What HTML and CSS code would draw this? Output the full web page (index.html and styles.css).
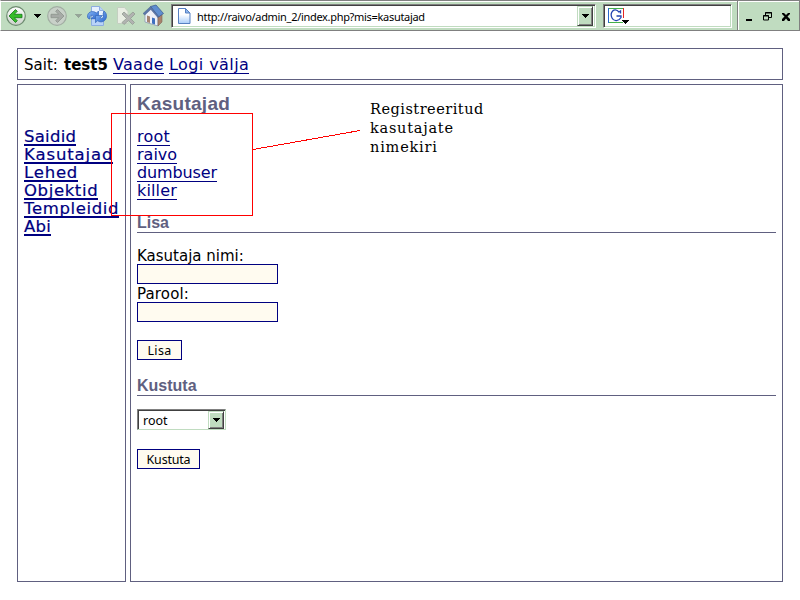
FILE: index.html
```
<!DOCTYPE html>
<html lang="et">
<head>
<meta charset="utf-8">
<title>Kasutajad</title>
<link rel="stylesheet" href="styles.css">
</head>
<body>
<div class="toolbar">
  <div class="nav-icons">
    <svg width="170" height="29" viewBox="1 2 170 29">
      <defs>
        <linearGradient id="disc" x2="0" y2="1"><stop stop-color="#fff"/><stop offset="1" stop-color="#c9d0c8"/></linearGradient>
        <linearGradient id="blue" x2="1" y2="1"><stop stop-color="#8abaf5"/><stop offset="1" stop-color="#2864ce"/></linearGradient>
      </defs>
      <circle cx="16" cy="16" r="9.3" fill="url(#disc)" stroke="#6d8b70" stroke-width="1.2"/>
      <path d="M9 16 15.500 9.500l1.800 1.800-3 3H22v3.400h-7.700l3 3-1.800 1.800z" fill="#35bd28" stroke="#14761a" stroke-width=".8"/>
      <path d="M34 14h7v1h-1v1h-1v1h-1v1h-1v-1h-1v-1h-1v-1h-1z"/>
      <circle cx="57" cy="16" r="9.3" fill="#c8d0c8" stroke="#a2aea3" stroke-width="1.2"/>
      <path d="M64 16 57.500 9.500l-1.800 1.800 3 3H51v3.400h7.700l-3 3 1.800 1.800z" fill="#a6aaa6" stroke="#8b938c" stroke-width=".8"/>
      <path d="M75 14h7v1h-1v1h-1v1h-1v1h-1v-1h-1v-1h-1v-1h-1z" fill="#96a598"/>
      <path d="M91.500 6.500h8l4 4v15h-12z" fill="#e6f1ff" stroke="#8dade0"/>
      <path d="M99.500 6.500v4h4" fill="#b9d3f6" stroke="#8dade0"/>
      <path d="M92 20h11v5H92z" fill="#b9d3f8"/>
      <path d="M87.500 17c-.5-5 5-7 9-4l2-2v8h-7.500l2.500-3c-2-1.500-4-.5-3.500 3-1.500 0-2.300-1-2.500-2z" fill="url(#blue)" stroke="#3567b7" stroke-width=".7"/>
      <path d="M104 11c4 3 3 9-1 10.500-2 .8-4 .3-5.500-.8l-2 2v-7.200h7l-2.500 2.700c2.500 1 4.500-1.500 3-4.200z" fill="url(#blue)" stroke="#3567b7" stroke-width=".7"/>
      <path d="M117.500 7.500h7l3.500 4v12h-10.500z" fill="#e9eee4" stroke="#c4cfc1"/>
      <path d="m122 14 2-2 4.500 4 4.500-4 2 2-4.500 4.500 4 4-2 2-4-4-4.500 4-2-2 4.500-4z" fill="#b1b3b1" stroke="#929c92" stroke-width=".8"/>
      <path d="M145 14l6-7 7 9v10l-13-4z" fill="#eef1f8" stroke="#8090ac" stroke-width=".7"/>
      <path d="M158 16l4-2v8l-4 4z" fill="#a9826c" stroke="#7c6558" stroke-width=".6"/>
      <path d="M150.500 6.500 156 5l7.500 8.500-5 3.500z" fill="#5f8fd0" stroke="#36568c" stroke-width=".7"/>
      <path d="M150.500 6.500 143 13.500l1.800 1.500 6-5.500 7 8 1-1z" fill="#5b77a8" stroke="#405887" stroke-width=".4"/>
      <path d="M152 17.500l3 1v6l-3-1z" fill="#3e70bf"/>
      <path d="M147 15.500l3 1v6.500l-3-1z" fill="#a68472"/>
    </svg>
  </div>
  <div class="address">
    <svg class="page" width="13" height="16" viewBox="0 0 13 16"><defs><linearGradient id="pg" x2="0" y2="1"><stop offset=".4" stop-color="#fff"/><stop offset="1" stop-color="#a9cdfa"/></linearGradient></defs><path d="M.5.500h7l4.500 4.500v10.500H.5z" fill="url(#pg)" stroke="#5680c2"/><path d="M7.500.500V5H12z" fill="#8fb7ed" stroke="#5680c2"/></svg>
    <span class="url">http://raivo/admin_2/index.php?mis=kasutajad</span>
    <span class="drop"><svg width="7" height="4"><path d="M0 0h7v1H6v1H5v1H4v1H3V3H2V2H1V1H0z"/></svg></span>
  </div>
  <div class="search">
    <svg width="22" height="18" viewBox="0 0 22 18"><path d="M.5 15.500H15M1 1.500h14" stroke="#43b04a"/><path d="M15.500 1v10" stroke="#e52525"/><path d="M.5 1v15" stroke="#2869ce"/><path d="M12.500 6.500V4L11 5C6-.5 1.500 6 4 11c2 4 7 3 9-.5V9H8.500" fill="none" stroke="#2343b0" stroke-width="1.300"/><path d="M14 13h7v1h-1v1h-1v1h-1v1h-1v-1h-1v-1h-1v-1h-1z"/></svg>
  </div>
  <div class="window-buttons">
    <svg width="60" height="29" viewBox="739 2 60 29"><path d="M746 19h6v2h-6z"/><path d="M765.500 15v-2.500h6v5H769M763.500 15.500h5v4.500h-5zM765 13h7M763 16h6" fill="none" stroke="#000"/><path d="M782 13h2l2 2 2-2h2v1l-2.500 2.500L790 19v2h-2l-2-2.500-2 2.500h-2v-2l2.500-2.500L782 14z"/></svg>
  </div>
</div>
<div class="content">
  <div class="panel site-bar"><span class="label">Sait:</span><b>test5</b><a class="view" href="#">Vaade</a><a class="logout" href="#">Logi välja</a></div>
  <div class="columns">
    <div class="panel sidebar">
      <a class="n1" href="#">Saidid</a>
      <a class="n2" href="#">Kasutajad</a>
      <a class="n3" href="#">Lehed</a>
      <a class="n4" href="#">Objektid</a>
      <a class="n5" href="#">Templeidid</a>
      <a class="n6" href="#">Abi</a>
    </div>
    <div class="panel main">
      <h1>Kasutajad</h1>
      <div class="users">
        <a class="u1" href="#">root</a>
        <a class="u2" href="#">raivo</a>
        <a class="u3" href="#">dumbuser</a>
        <a class="u4" href="#">killer</a>
      </div>
      <h2 class="add">Lisa</h2>
      <div class="form">
        <label for="name">Kasutaja nimi:</label>
        <input id="name" type="text">
        <label for="pass" class="pass">Parool:</label>
        <input id="pass" type="password">
        <button class="btn-add">Lisa</button>
      </div>
      <h2 class="del">Kustuta</h2>
      <div class="select"><span>root</span><span class="drop"><svg width="7" height="4"><path d="M0 0h7v1H6v1H5v1H4v1H3V3H2V2H1V1H0z"/></svg></span></div>
      <button class="btn-del">Kustuta</button>
    </div>
  </div>
</div>
<svg class="callout" width="800" height="600" shape-rendering="crispEdges"><path d="M111.500 113.500h141v102h-141zM253 149.500l107-19" fill="none" stroke="#f00"/></svg>
<div class="note"><span class="r1">Registreeritud</span><span class="r2">kasutajate</span><span class="r3">nimekiri</span></div>
</body>
</html>
```
FILE: styles.css
```
* { box-sizing: border-box; }
body { margin: 0; width: 800px; height: 600px; overflow: hidden; background: #fff; color: #000; font: 15px/18px "DejaVu Sans", Verdana, sans-serif; }
a { color: #000080; text-decoration: none; border-bottom: 1px solid #000080; }
.toolbar { display: flex; height: 31px; background: #c0dcc0; border: 1px solid #808080; border-left-color: #fff; box-shadow: inset 0 1px #fff; }
.nav-icons { width: 170px; padding-top: 1px; }
.nav-icons svg, .window-buttons svg { display: block; }
.address, .search { display: flex; align-items: center; height: 24px; margin-top: 3px; background: #fff; border: 1px solid; border-color: #808080 #fff #fff #808080; box-shadow: inset 1px 1px #404040, inset -1px -1px #c0dcc0; }
.address { width: 426px; padding: 1px 2px 1px 6px; }
.page { flex: none; }
.url { margin: 2px 0 0 6px; font: 11px/18px "Noto Sans", sans-serif; flex: 1; white-space: nowrap; letter-spacing: -.31px; }
.drop { display: flex; align-items: center; justify-content: center; background: #c0dcc0; border: 1px solid; border-color: #c0dcc0 #404040 #404040 #c0dcc0; box-shadow: inset 1px 1px #fff, inset -1px -1px #808080; }
.address .drop { width: 16px; height: 20px; }
.search { width: 129px; margin-left: 7px; padding-left: 4px; }
.window-buttons { width: 62px; margin-left: 5px; padding: 1px 0 0 1px; border-left: 1px solid #808080; box-shadow: inset 1px 0 #fff; }
.content { padding: 17px 17px 0; }
.panel { border: 1px solid #606080; }
.site-bar { height: 32px; display: flex; align-items: flex-start; padding: 7px 6px; white-space: nowrap; }
.site-bar b { margin-left: 6px; font-size: 15px; letter-spacing: 0; width: 43px; }
.label { width: 34px; }
.site-bar a { font-size: 16px; line-height: 17px; }
.view { margin-left: 6px; width: 51px; letter-spacing: .3px; }
.logout { margin-left: 5px; width: 80px; letter-spacing: .42px; }
.columns { display: flex; gap: 4px; margin-top: 4px; }
.sidebar { width: 109px; height: 498px; padding: 43px 6px 0; display: flex; flex-direction: column; align-items: flex-start; font-size: 16.500px; letter-spacing: .3px; -webkit-text-stroke: .2px #000080; }
.sidebar a { height: 18px; line-height: 17px; border-bottom-width: 2px; white-space: nowrap; }
.n1 { letter-spacing: .25px; }
.n2 { letter-spacing: .88px; }
.n3 { letter-spacing: .8px; }
.n4 { letter-spacing: .62px; }
.n5 { letter-spacing: .63px; }
.main { width: 653px; height: 498px; padding: 8px 6px 0; }
h1, h2 { margin: 0; color: #606080; font-family: "Liberation Sans", Arial, sans-serif; }
h1 { font-size: 19px; line-height: 21px; letter-spacing: .25px; }
.users { display: flex; flex-direction: column; align-items: flex-start; margin-top: 14px; font-size: 16px; }
.users a { height: 18px; line-height: 18px; }
.u1 { letter-spacing: .2px; }
.u3 { letter-spacing: -.13px; }
.u4 { letter-spacing: .15px; }
h2 { font-size: 16px; line-height: 20px; height: 20px; border-bottom: 1px solid #606080; }
.add { margin-top: 13px; }
.form { display: flex; flex-direction: column; align-items: flex-start; margin-top: 13px; }
label { height: 18px; line-height: 20px; white-space: nowrap; }
.pass { letter-spacing: .15px; }
input { width: 141px; height: 20px; margin: 0; border: 1px solid #000080; background: #fffbf0; }
button { display: block; height: 20px; margin: 0; padding: 1px 0 0; border: 1px solid #000080; background: #fffbf0; font: 12.500px/17px "Noto Sans", sans-serif; color: #000; text-align: center; }
.btn-add { width: 45px; margin-top: 18px; letter-spacing: .3px; }
.del { margin-top: 16px; }
.select { display: flex; justify-content: space-between; width: 89px; height: 21px; margin-top: 13px; padding: 1px 1px 1px 5px; background: #fff; border: 1px solid; border-color: #808080 #c0dcc0 #c0dcc0 #808080; box-shadow: inset 1px 1px #404040; font: 12.500px/20px "Noto Sans", sans-serif; }
.select .drop { width: 16px; height: 18px; }
.btn-del { width: 63px; margin-top: 19px; letter-spacing: -.2px; }
.callout { position: absolute; left: 0; top: 0; pointer-events: none; }
.note { position: absolute; left: 370px; top: 100px; display: flex; flex-direction: column; align-items: flex-start; font: 14.500px/19px "DejaVu Serif", serif; white-space: nowrap; letter-spacing: .5px; }
.r2 { letter-spacing: .75px; }
.r3 { letter-spacing: .8px; }
```
